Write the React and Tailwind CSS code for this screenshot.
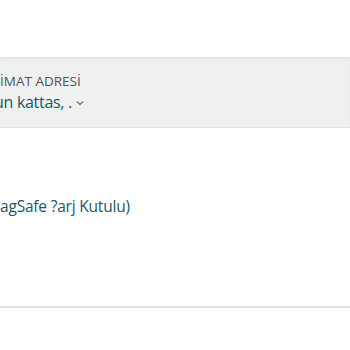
export default function App() {
  return (
    <div className="w-[350px] h-[350px] bg-white overflow-hidden" style={{ fontFamily: '"Open Sans", "Noto Sans", sans-serif' }}>
      <div className="h-[57px]" />
      <div className="h-[71px] bg-[#eff0f0] shadow-[inset_0_2px_2px_rgba(0,0,0,0.05)] border-b border-[#e4e6e6] pt-[16px]">
        <div className="text-[13.5px] leading-[16px] text-[#4f5454] whitespace-nowrap">İMAT ADRESİ</div>
        <div className="flex items-center text-[16px] leading-[22px] text-[#1d5565] whitespace-nowrap -ml-[6px] mt-[2px] tracking-[-0.3px]">
          <span>un kattas, .</span>
          <svg className="ml-[4px] mt-[2px]" width="8" height="6" viewBox="0 0 8 6" fill="none" stroke="#6b7474" strokeWidth="1.3">
            <path d="M1 1.5 L4 4.5 L7 1.5" />
          </svg>
        </div>
      </div>
      <div className="h-[67px]" />
      <div className="text-[15.5px] leading-[22px] text-[#1d5565] whitespace-nowrap tracking-[-0.2px]">agSafe ?arj Kutulu)</div>
      <div className="h-[89px]" />
      <div className="h-[2px] bg-[#e3e3e3]" />
    </div>
  );
}
